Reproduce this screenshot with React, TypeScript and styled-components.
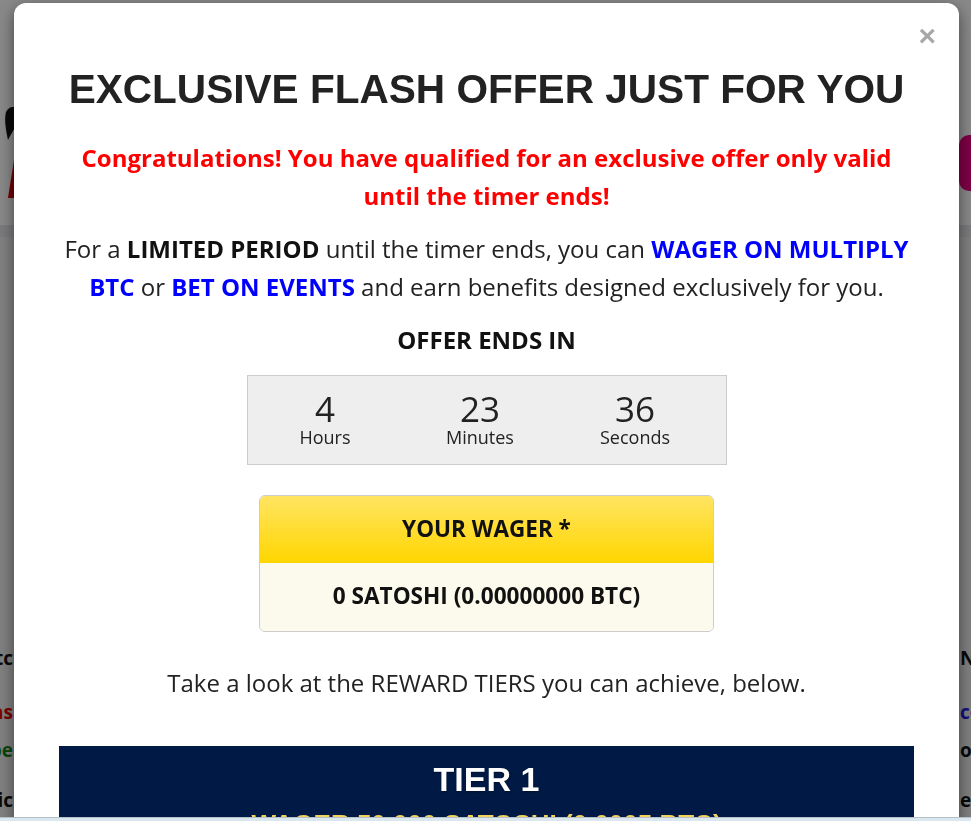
import React from "react";
import styled, { createGlobalStyle } from "styled-components";

const GlobalStyle = createGlobalStyle`
  html, body { margin: 0; padding: 0; overflow: hidden; }
  body { font-family: "Open Sans", "Liberation Sans", sans-serif; background: #ececec; }
  * { box-sizing: border-box; }
`;

/* ---------- background page (under the overlay) ---------- */
const Page = styled.div`
  width: 100vw;
  height: 100vh;
  overflow: hidden;
`;

const Banner = styled.header`
  height: 237px;
  background: #fbfbfd;
  display: flex;
  justify-content: space-between;
  align-items: flex-start;
  padding-top: 100px;
  border-bottom: 12px solid #e2e2e6;
`;

const Logo = styled.svg`
  width: 60px;
  height: 100px;
  flex: none;
`;

const PinkButton = styled.div`
  width: 140px;
  height: 56px;
  margin-top: 35px;
  margin-right: -128px;
  border-radius: 10px 0 0 10px;
  background: #e8007f;
  flex: none;
`;

const Columns = styled.div`
  display: flex;
  justify-content: space-between;
  padding-top: 411px;
`;

const Column = styled.div<{ $side: "left" | "right" }>`
  width: 200px;
  flex: none;
  text-align: ${(p) => (p.$side === "left" ? "right" : "left")};
  ${(p) => (p.$side === "left" ? "margin-left: -187px;" : "margin-right: -189px;")}
`;

const BgLine = styled.div<{ $color: string; $gap: number }>`
  font-family: "Open Sans", sans-serif;
  font-weight: 700;
  font-size: 19px;
  line-height: 20px;
  color: ${(p) => p.$color};
  margin-top: ${(p) => p.$gap}px;
  white-space: nowrap;
`;

const BottomBar = styled.div`
  position: fixed;
  left: 0;
  right: 0;
  bottom: 0;
  height: 4px;
  background: #dbe7ee;
  border-top: 1px solid #b4c0c8;
  z-index: 20;
`;

/* ---------- modal ---------- */
const Overlay = styled.div`
  position: fixed;
  inset: 0;
  background: rgba(0, 0, 0, 0.46);
  padding: 3px 0 0 14px;
  overflow: hidden;
  z-index: 10;
`;

const Dialog = styled.div`
  position: relative;
  width: 945px;
  background: #fff;
  border-radius: 12px;
  box-shadow: 0 5px 15px rgba(0, 0, 0, 0.5);
  padding: 64px 45px 40px;
  text-align: center;
  color: #222;
`;

const Close = styled.button`
  position: absolute;
  top: 13px;
  right: 23px;
  border: 0;
  background: none;
  padding: 0;
  font-family: "Liberation Sans", Arial, sans-serif;
  font-weight: 700;
  font-size: 30px;
  line-height: 40px;
  color: #a8a8a8;
  cursor: pointer;
`;

const Title = styled.h1`
  margin: 0;
  font-family: "Liberation Sans", Arial, sans-serif;
  font-weight: 700;
  font-size: 40.6px;
  line-height: 44px;
  color: #222;
  white-space: nowrap;
`;

const Text = styled.p<{ $gap: number; $color?: string; $bold?: boolean }>`
  margin: ${(p) => p.$gap}px 0 0;
  font-size: 24px;
  line-height: 38.4px;
  font-weight: ${(p) => (p.$bold ? 700 : 400)};
  color: ${(p) => p.$color || "#222"};
`;

const Strong = styled.strong<{ $blue?: boolean }>`
  font-weight: 700;
  color: ${(p) => (p.$blue ? "#0000ff" : "#111")};
`;

const TimerLabel = styled.div`
  margin-top: 18px;
  font-size: 24px;
  line-height: 30px;
  font-weight: 700;
  color: #111;
`;

const Timer = styled.div`
  margin: 20px auto 0;
  width: 480px;
  background: #eeeeee;
  border: 1px solid #cccccc;
  padding: 15px 0 17px;
  display: grid;
  grid-template-columns: repeat(3, 155px);
`;

const TimeUnit = styled.div`
  display: flex;
  flex-direction: column;
  align-items: center;
`;

const TimeValue = styled.span`
  font-size: 35px;
  line-height: 36px;
  color: #222;
`;

const TimeName = styled.span`
  font-size: 18px;
  line-height: 20px;
  color: #222;
`;

const Wager = styled.div`
  margin: 30px auto 0;
  width: 455px;
  border: 1px solid #cccccc;
  border-radius: 6px;
  overflow: hidden;
`;

const WagerHead = styled.div`
  height: 67px;
  padding-bottom: 2px;
  display: flex;
  align-items: center;
  justify-content: center;
  background: linear-gradient(to bottom, #ffe462, #ffd600);
  font-size: 22.5px;
  font-weight: 700;
  color: #111;
`;

const WagerBody = styled.div`
  height: 68px;
  padding-bottom: 2px;
  display: flex;
  align-items: center;
  justify-content: center;
  background: #fcfaec;
  font-size: 22.6px;
  font-weight: 700;
  color: #111;
`;

const Tier = styled.div`
  margin-top: 44px;
  background: #001a45;
  padding: 13px 0 20px;
`;

const TierTitle = styled.div`
  font-family: "Liberation Sans", Arial, sans-serif;
  font-weight: 700;
  font-size: 34px;
  line-height: 40px;
  color: #fff;
  text-shadow: 0 1px 2px rgba(0, 0, 0, 0.4);
`;

const TierSub = styled.div`
  margin-top: 10px;
  font-family: "Liberation Sans", Arial, sans-serif;
  font-weight: 700;
  font-size: 26px;
  line-height: 30px;
  color: #f2d15c;
`;

export default function App() {
  return (
    <>
      <GlobalStyle />
      <Page>
        <Banner>
          <Logo viewBox="0 0 60 100">
            <path d="M6 12 C10 4 18 6 20 14 C18 24 12 32 8 40 C6 30 4 20 6 12 Z" fill="#111" />
            <path d="M8 98 L14 60 L20 98 Z" fill="#d00000" />
          </Logo>
          <PinkButton />
        </Banner>
        <Columns>
          <Column $side="left">
            <BgLine $color="#111" $gap={0}>Bitcoin etc</BgLine>
            <BgLine $color="#e00000" $gap={34}>Free extras</BgLine>
            <BgLine $color="#108010" $gap={18}>Prize pipe</BgLine>
            <BgLine $color="#111" $gap={30}>Basic</BgLine>
          </Column>
          <Column $side="right">
            <BgLine $color="#111" $gap={0}>NEW</BgLine>
            <BgLine $color="#2020e0" $gap={34}>coins</BgLine>
            <BgLine $color="#111" $gap={18}>on</BgLine>
            <BgLine $color="#111" $gap={30}>earn</BgLine>
          </Column>
        </Columns>
      </Page>

      <Overlay>
        <Dialog>
          <Close aria-label="Close">×</Close>
          <Title>EXCLUSIVE FLASH OFFER JUST FOR YOU</Title>
          <Text $gap={28} $color="#ff0000" $bold>
            Congratulations! You have qualified for an exclusive offer only valid until the timer ends!
          </Text>
          <Text $gap={14}>
            For a <Strong>LIMITED PERIOD</Strong> until the timer ends, you can{" "}
            <Strong $blue>WAGER ON MULTIPLY BTC</Strong> or <Strong $blue>BET ON EVENTS</Strong> and
            earn benefits designed exclusively for you.
          </Text>
          <TimerLabel>OFFER ENDS IN</TimerLabel>
          <Timer>
            <TimeUnit>
              <TimeValue>4</TimeValue>
              <TimeName>Hours</TimeName>
            </TimeUnit>
            <TimeUnit>
              <TimeValue>23</TimeValue>
              <TimeName>Minutes</TimeName>
            </TimeUnit>
            <TimeUnit>
              <TimeValue>36</TimeValue>
              <TimeName>Seconds</TimeName>
            </TimeUnit>
          </Timer>
          <Wager>
            <WagerHead>YOUR WAGER *</WagerHead>
            <WagerBody>0 SATOSHI (0.00000000 BTC)</WagerBody>
          </Wager>
          <Text $gap={32}>Take a look at the REWARD TIERS you can achieve, below.</Text>
          <Tier>
            <TierTitle>TIER 1</TierTitle>
            <TierSub>WAGER 50,000 SATOSHI (0.0005 BTC)</TierSub>
          </Tier>
        </Dialog>
      </Overlay>
      <BottomBar />
    </>
  );
}
